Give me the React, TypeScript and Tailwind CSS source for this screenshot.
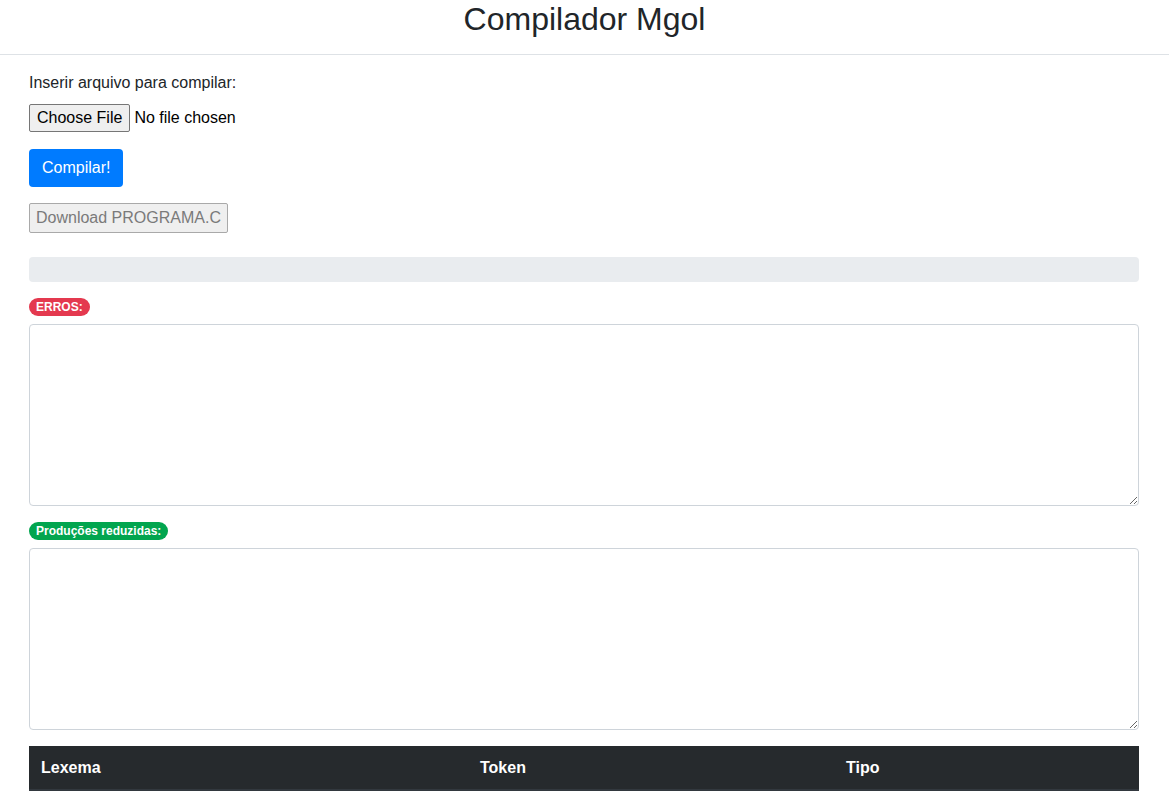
export default function App() {
  return (
    <div className="min-h-screen bg-white text-[#212529] font-['Liberation_Sans',Arial,sans-serif] text-base">
      {/* header */}
      <div className="h-[55px] border-b border-[#dee2e6] flex justify-center">
        <h1 className="text-[32px] leading-[1.2] font-medium">Compilador Mgol</h1>
      </div>

      <div className="ml-[29px] w-[1110px] pt-[16px]">
        <label htmlFor="arquivo" className="block leading-6">
          Inserir arquivo para compilar:
        </label>
        <div className="mt-[9px] flex items-center h-[28px]">
          <button className="h-[28px] px-[7px] bg-[#efefef] border border-[#767676] rounded-[2px] text-black text-base leading-none">
            Choose File
          </button>
          <span className="ml-[4px] text-black">No file chosen</span>
        </div>
        <button className="mt-[17px] block h-[38px] px-[13px] bg-[#007bff] text-white rounded-[4px] leading-6">
          Compilar!
        </button>
        <button
          disabled
          className="mt-[16px] block h-[30px] px-[6px] bg-[#efefef] border border-[#a9a9a9] rounded-[2px] text-[#7a7a7a] leading-none"
        >
          Download PROGRAMA.C
        </button>

        {/* progress */}
        <div className="mt-[24px] h-[25px] bg-[#e9ecef] rounded-[4px]" />

        <div className="mt-[16px] flex h-[18px]">
          <span className="h-[18px] px-[7px] rounded-full bg-[#e4394f] text-white text-[12px] font-bold leading-[18px]">
            ERROS:
          </span>
        </div>
        <textarea className="mt-[8px] block w-full h-[182px] border border-[#ced4da] rounded-[4px] resize-y" />

        <div className="mt-[16px] flex h-[18px]">
          <span className="h-[18px] px-[7px] rounded-full bg-[#02a54f] text-white text-[12px] font-bold leading-[18px]">
            Produções reduzidas:
          </span>
        </div>
        <textarea className="mt-[8px] block w-full h-[182px] border border-[#ced4da] rounded-[4px] resize-y" />

        <table className="mt-[16px] w-full border-collapse">
          <thead>
            <tr className="bg-[#262a2d] text-white">
              <th className="w-[439px] text-left font-bold px-[12px] pt-[10px] pb-[9px] border-b-2 border-[#32383e] leading-6">Lexema</th>
              <th className="w-[366px] text-left font-bold px-[12px] pt-[10px] pb-[9px] border-b-2 border-[#32383e] leading-6">Token</th>
              <th className="text-left font-bold px-[12px] pt-[10px] pb-[9px] border-b-2 border-[#32383e] leading-6">Tipo</th>
            </tr>
          </thead>
        </table>
      </div>
    </div>
  );
}
